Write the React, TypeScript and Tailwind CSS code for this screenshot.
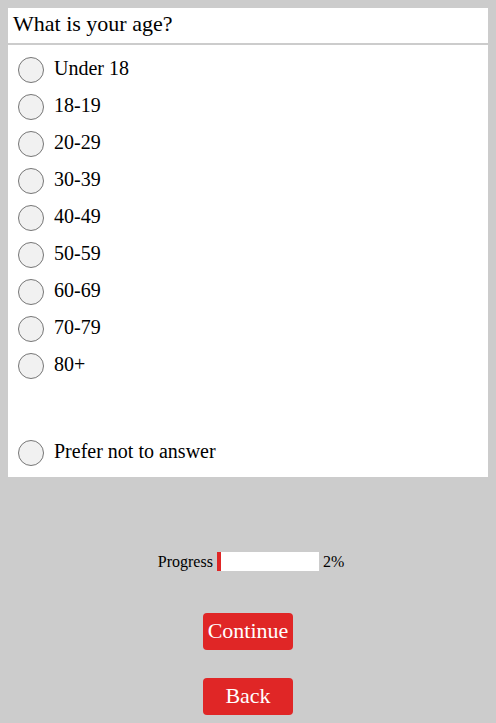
import React, { useState } from "react";

const options = [
	"Under 18",
	"18-19",
	"20-29",
	"30-39",
	"40-49",
	"50-59",
	"60-69",
	"70-79",
	"80+",
];

const Radio = ({
	label,
	checked,
	onSelect,
}: {
	label: string;
	checked: boolean;
	onSelect: () => void;
}) => (
	<label
		onClick={onSelect}
		className="flex h-[37px] items-center gap-[10px] pl-[10px] cursor-pointer"
	>
		<span className="flex h-[26px] w-[26px] items-center justify-center rounded-full border border-[#767676] bg-[#f1f1f1]">
			{checked && <span className="h-[14px] w-[14px] rounded-full bg-[#333]" />}
		</span>
		<span className="pb-[3px] text-[20px] text-black">{label}</span>
	</label>
);

export default function App() {
	const [answer, setAnswer] = useState<string | null>(null);

	return (
		<div
			className="min-h-[723px] w-full bg-[#cccccc] pt-[8px]"
			style={{ fontFamily: '"Liberation Serif", serif' }}
		>
			{/* Question card */}
			<div className="mx-[8px] bg-white">
				<div className="border-b-2 border-[#cccccc] px-[5px] pt-[4px] pb-[7px] text-[22px] leading-[24px] text-black">
					What is your age?
				</div>
				<div className="flex flex-col pt-[6px] pb-[6px]">
					{options.map((o) => (
						<Radio
							key={o}
							label={o}
							checked={answer === o}
							onSelect={() => setAnswer(o)}
						/>
					))}
					<div className="h-[50px]" />
					<Radio
						label="Prefer not to answer"
						checked={answer === "none"}
						onSelect={() => setAnswer("none")}
					/>
				</div>
			</div>

			{/* Progress */}
			<div className="mt-[75px] flex items-center justify-center gap-[4px] pl-[6px] text-[16px] leading-[19px] text-black">
				<span>Progress</span>
				<div className="h-[19px] w-[102px] bg-white">
					<div className="h-full w-[4px] bg-[#e02626]" />
				</div>
				<span>2%</span>
			</div>

			{/* Buttons */}
			<div className="mt-[42px] flex flex-col items-center gap-[28px]">
				<button className="h-[37px] w-[90px] rounded-[4px] bg-[#e02626] pb-[2px] text-[22px] leading-[26px] text-white">
					Continue
				</button>
				<button className="h-[37px] w-[90px] rounded-[4px] bg-[#e02626] pb-[2px] text-[22px] leading-[26px] text-white">
					Back
				</button>
			</div>
		</div>
	);
}
